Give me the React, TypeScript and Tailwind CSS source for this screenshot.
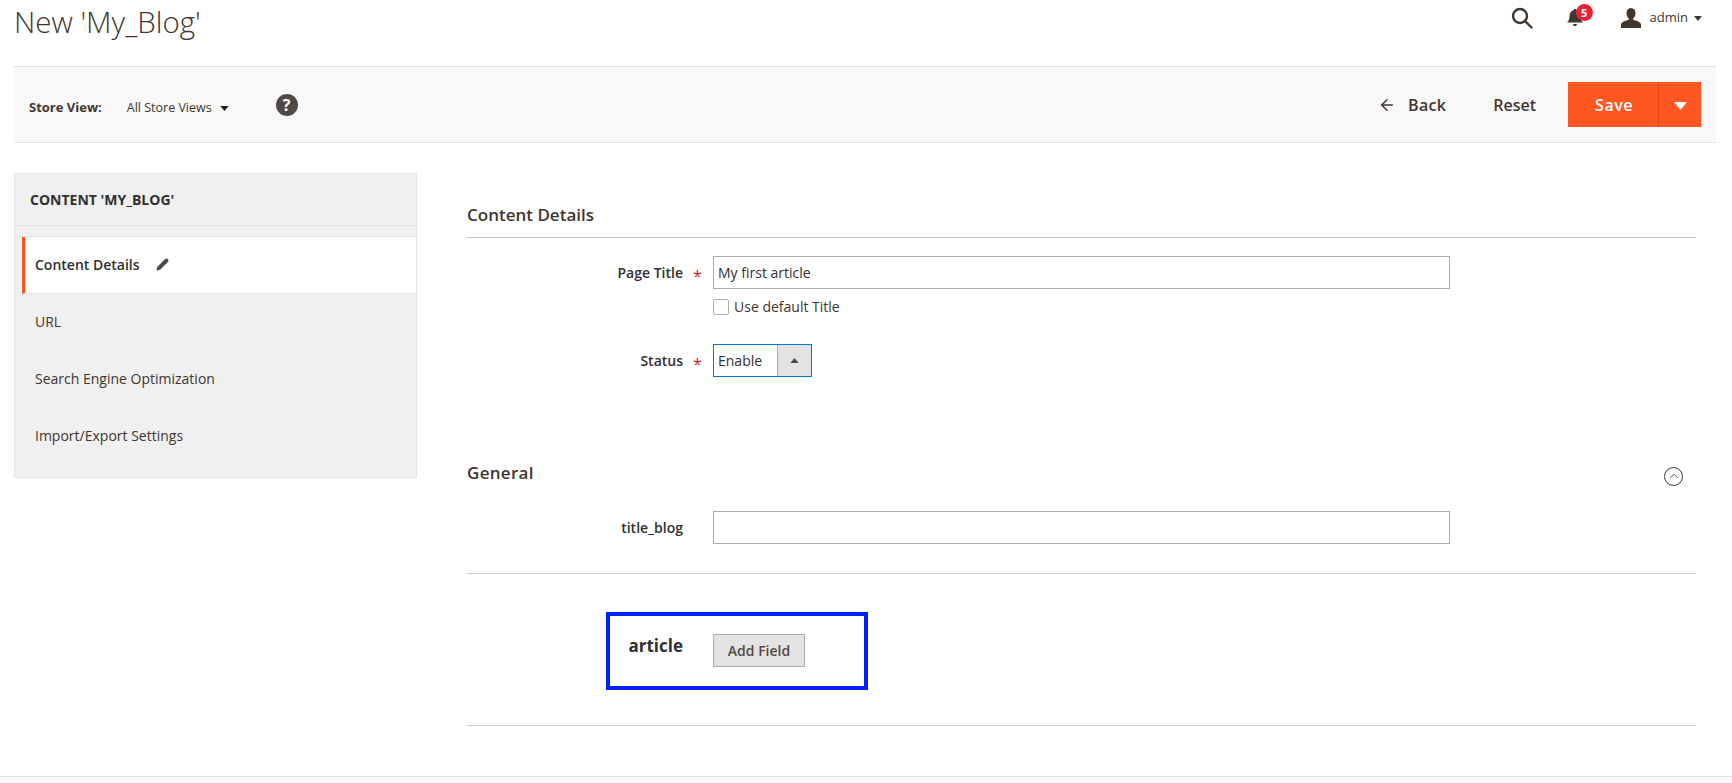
import { ArrowLeft, ChevronUp, Pencil } from "lucide-react";

function Caret({ className }: { className: string }) {
  return (
    <svg viewBox="0 0 10 6" className={className} fill="currentColor">
      <path d="M0 0h10L5 6z" />
    </svg>
  );
}

function Label({ text, required, bold }: { text: string; required?: boolean; bold?: boolean }) {
  return (
    <div className="flex h-[33px] w-[246px] shrink-0">
      <span className={`w-[216px] text-right text-[14px] leading-[33px] text-[#303030] ${bold ? "font-bold" : "font-semibold"}`}>
        {text}
      </span>
      {required && <span className="ml-[10px] text-[16px] leading-[40px] text-[#e22626]">*</span>}
    </div>
  );
}

function SideItem({ text }: { text: string }) {
  return (
    <div className="flex h-[57px] items-center pb-[2px] pl-[20px] text-[14px] text-[#41362f]">
      {text}
    </div>
  );
}

export default function App() {
  return (
    <div className="flex h-[783px] flex-col overflow-hidden bg-white font-['Open_Sans',sans-serif]">
      {/* Page header */}
      <header className="flex h-[66px] shrink-0 justify-between pl-[14px] pr-[30px]">
        <h1 className="pt-[3px] text-[29.5px] font-light leading-[38px] text-[#41362f]">New 'My_Blog'</h1>
        <div className="flex h-[36px] items-center text-[#41362f]">
          <svg viewBox="0 0 22 22" className="mr-[33px] h-[22px] w-[22px]" fill="none" stroke="currentColor" strokeWidth="2.4">
            <circle cx="9" cy="9" r="7" />
            <path d="M14 14l6.500 6.500" strokeLinecap="round" />
          </svg>
          <div className="relative mr-[37px] h-[20px] w-[18px]">
            <svg viewBox="0 0 18 20" className="h-[20px] w-[18px]" fill="currentColor">
              <path d="M9 1c1 0 1.500.6 1.500 1.300C13 3 14.500 5 14.500 8c0 3.500.8 5 2.500 6.500H1C2.700 13 3.500 11.500 3.500 8c0-3 1.500-5 4-5.700C7.500 1.600 8 1 9 1zM7 16h4c0 1.300-.9 2.200-2 2.200S7 17.300 7 16z" />
            </svg>
            <span className="absolute left-[10px] top-[-4px] flex h-[17px] w-[17px] items-center justify-center rounded-full bg-[#ee1f35] text-[11px] font-bold leading-none text-white">
              5
            </span>
          </div>
          <svg viewBox="0 0 20 20" className="mr-[9px] h-[20px] w-[20px]" fill="currentColor">
            <path d="M10 0c3 0 4.500 2.200 4.500 5 0 2.300-1 4.300-2.300 5.400v1.400c2.600.8 6.800 2 7.800 4.200V20H0v-4c1-2.200 5.200-3.400 7.800-4.200v-1.400C6.500 9.300 5.500 7.300 5.500 5c0-2.800 1.500-5 4.500-5z" />
          </svg>
          <span className="text-[13px] text-[#41362f]">admin</span>
          <Caret className="ml-[6px] h-[5px] w-[8px]" />
        </div>
      </header>

      {/* Toolbar */}
      <div className="ml-[14px] mr-[16px] flex h-[77px] shrink-0 items-center justify-between border-y border-[#e3e3e3] bg-[#f8f8f8] pl-[15px] pr-[15px]">
        <div className="flex items-center pt-[7px] text-[#41362f]">
          <span className="text-[13px] font-bold">Store View:</span>
          <span className="ml-[25px] text-[12.500px]">All Store Views</span>
          <Caret className="ml-[8px] h-[5px] w-[9px] text-[#1f1a17]" />
          <span className="ml-[47px] mt-[-6px] flex h-[22px] w-[22px] items-center justify-center rounded-full bg-[#514943] text-[16px] font-bold leading-none text-white">
            ?
          </span>
        </div>
        <div className="flex items-center text-[#41362f]">
          <ArrowLeft className="h-[18px] w-[18px]" strokeWidth={2} />
          <span className="ml-[12px] text-[16px] font-semibold tracking-[0.3px]">Back</span>
          <span className="ml-[47px] text-[16px] font-semibold">Reset</span>
          <div className="ml-[32px] flex h-[45px] w-[133px] bg-[#ff5722] text-white">
            <span className="flex w-[91px] items-center justify-center border-r border-[#d9481b] pl-[2px] text-[16px] font-semibold tracking-[0.5px]">
              Save
            </span>
            <span className="flex flex-1 items-center justify-center pt-[3px]">
              <Caret className="h-[8px] w-[13px]" />
            </span>
          </div>
        </div>
      </div>

      {/* Body */}
      <div className="mt-[30px] flex">
        <aside className="ml-[14px] w-[403px] shrink-0 self-start border border-[#e3e3e3] bg-[#f0f0f0]">
          <div className="flex h-[52px] items-center border-b border-[#e3e3e3] pl-[15px] text-[14px] font-bold text-[#303030]">
            CONTENT 'MY_BLOG'
          </div>
          <div className="mt-[10px] border-t border-[#e3e3e3]">
            <div className="ml-[7px] flex h-[57px] items-center border-b border-[#e3e3e3] border-l-[3px] border-l-[#ff5722] bg-white pb-[2px] pl-[10px] text-[14px] font-semibold text-[#303030]">
              Content Details
              <Pencil className="ml-[16px] h-[13px] w-[13px] fill-[#514943] text-[#514943]" />
            </div>
            <SideItem text="URL" />
            <SideItem text="Search Engine Optimization" />
            <SideItem text="Import/Export Settings" />
            <div className="h-[12px]" />
          </div>
        </aside>

        <main className="ml-[50px] w-[1229px]">
          <h2 className="flex h-[65px] items-end border-b border-[#c9c3be] pb-[10px] text-[17px] font-semibold text-[#41362f]">
            Content Details
          </h2>

          <div className="mt-[18px] flex">
            <Label text="Page Title" required />
            <div>
              <input
                readOnly
                value="My first article"
                className="h-[33px] w-[737px] border border-[#adadad] px-[4px] text-[14px] text-[#303030] outline-none"
              />
              <label className="mt-[10px] flex h-[16px] items-center">
                <span className="h-[16px] w-[16px] rounded-[2px] border border-[#adadad] bg-white" />
                <span className="ml-[5px] pb-[2px] text-[14px] text-[#41362f]">Use default Title</span>
              </label>
            </div>
          </div>

          <div className="mt-[29px] flex">
            <Label text="Status" required />
            <div className="flex h-[33px] w-[99px] border border-[#007bdb]">
              <span className="flex-1 pl-[4px] text-[14px] leading-[31px] text-[#303030]">Enable</span>
              <span className="flex w-[34px] items-center justify-center border-l border-[#adadad] bg-[#e3e3e3]">
                <Caret className="h-[5px] w-[9px] rotate-180 text-[#514943]" />
              </span>
            </div>
          </div>

          <div className="mt-[84px] flex h-[24px] items-center justify-between">
            <h2 className="text-[17px] font-semibold tracking-[0.3px] text-[#41362f]">General</h2>
            <span className="mr-[13px] mt-[6px] flex h-[19px] w-[19px] items-center justify-center rounded-full border border-[#41362f]">
              <ChevronUp className="h-[14px] w-[14px] text-[#41362f]" strokeWidth={1.5} />
            </span>
          </div>

          <div className="mt-[26px] flex">
            <Label text="title_blog" />
            <input readOnly className="h-[33px] w-[737px] border border-[#adadad] outline-none" />
          </div>

          <div className="mt-[29px] border-t border-[#cccccc]" />

          <div className="ml-[139px] mt-[38px] flex h-[78px] w-[262px] border-[4px] border-[#0021f5]">
            <span className="mt-[13px] w-[73px] text-right text-[17px] font-bold leading-[33px] text-[#303030]">article</span>
            <button className="ml-[30px] mt-[18px] h-[33px] w-[92px] border border-[#adadad] bg-[#e3e3e3] text-[14px] font-semibold text-[#514943]">
              Add Field
            </button>
          </div>

          <div className="mt-[35px] border-t border-[#cccccc]" />
        </main>
      </div>

      <footer className="mt-[50px] flex-1 border-t border-[#e3e3e3] bg-[#f8f8f8]" />
    </div>
  );
}
